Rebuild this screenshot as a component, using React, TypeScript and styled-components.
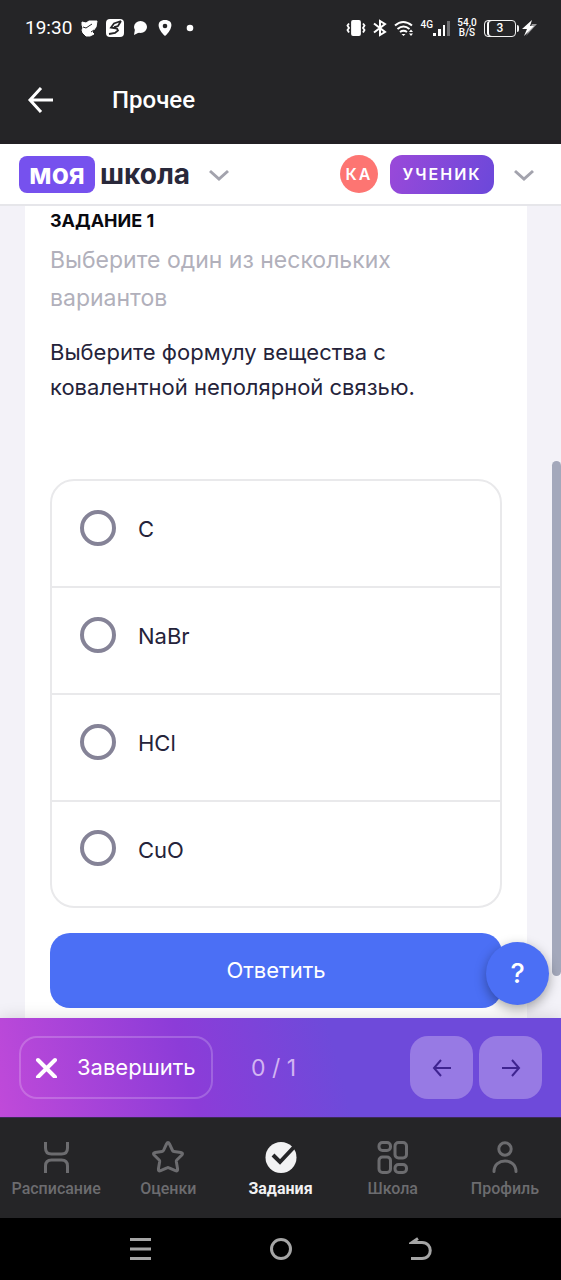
import React from "react";
import styled, { createGlobalStyle } from "styled-components";

const GlobalStyle = createGlobalStyle`
  *, *::before, *::after { box-sizing: border-box; }
  body { margin: 0; background: #000; font-family: Inter, "Liberation Sans", sans-serif; }
  button { font: inherit; border: 0; padding: 0; cursor: pointer; }
  h1, h2, p { margin: 0; }
`;

const Screen = styled.div`
  display: flex;
  flex-direction: column;
  min-height: 100vh;
`;

const TopArea = styled.div`
  background: #252527;
  color: #fff;
  border-bottom: 4px solid #221f24;
  font-family: Roboto, "Liberation Sans", sans-serif;
`;

const StatusBar = styled.div`
  display: flex;
  align-items: center;
  justify-content: space-between;
  height: 56px;
  padding: 0 23px 0 25px;
`;

const StatusGroup = styled.div<{ $gap: number }>`
  display: flex;
  align-items: center;
  gap: ${(p) => p.$gap}px;
  svg { display: block; flex: none; }
`;

const Clock = styled.span`
  font-size: 19px;
  line-height: 24px;
`;

const Speed = styled.span`
  display: flex;
  flex-direction: column;
  align-items: center;
  width: 20px;
  font-size: 10px;
  line-height: 10px;
  font-weight: 500;
`;

const Signal = styled.span`
  display: flex;
  align-items: flex-end;
`;

const Network = styled.span`
  font-size: 10px;
  line-height: 12px;
  font-weight: 500;
  align-self: flex-start;
`;

const Battery = styled.span`
  display: flex;
  align-items: center;
  gap: 1px;
`;

const BatteryBody = styled.span`
  display: flex;
  align-items: center;
  justify-content: center;
  width: 32px;
  height: 17px;
  border: 1px solid #f2f2f2;
  border-radius: 4px;
  font-size: 12px;
  font-weight: 500;
  line-height: 12px;
  box-shadow: inset 2px 0 #252527, inset 4px 0 #fff;
`;

const BatteryTip = styled.span`
  width: 2px;
  height: 7px;
  background: #f2f2f2;
  border-radius: 0 2px 2px 0;
`;

const AppBar = styled.header`
  display: flex;
  align-items: center;
  gap: 58px;
  height: 84px;
  padding: 4px 27px 0;
`;

const AppTitle = styled.h1`
  font-size: 24px;
  line-height: 28px;
  font-weight: 500;
`;

const IconButton = styled.button`
  display: flex;
  align-items: center;
  justify-content: center;
  background: none;
  color: inherit;
`;

const SiteHeader = styled.div`
  display: flex;
  align-items: center;
  justify-content: space-between;
  height: 62px;
  padding: 0 25px 0 19px;
  background: #fff;
  border-bottom: 2px solid #e6e6ea;
  color: #a3a3ad;
`;

const Cluster = styled.div<{ $gap: number }>`
  display: flex;
  align-items: center;
  gap: ${(p) => p.$gap}px;
`;

const Logo = styled.a`
  display: flex;
  align-items: center;
  gap: 5px;
  color: #29283a;
  font-size: 28px;
  line-height: 36px;
  font-weight: 700;
  text-decoration: none;
`;

const LogoBadge = styled.span`
  width: 76px;
  height: 37px;
  text-align: center;
  background: #7651ee;
  color: #fff;
  border-radius: 8px;
`;

const Avatar = styled.span`
  width: 38px;
  height: 38px;
  border-radius: 50%;
  background: #fd7572;
  color: #fff;
  font-size: 16px;
  line-height: 38px;
  font-weight: 600;
  letter-spacing: 2px;
  text-align: center;
`;

const RoleButton = styled.button`
  width: 104px;
  height: 39px;
  border-radius: 12px;
  background: linear-gradient(110deg, #9a49d9, #6b48da);
  color: #fff;
  font-size: 16px;
  font-weight: 600;
  letter-spacing: 2px;
`;

const Main = styled.main`
  position: relative;
  flex: 1;
  display: flex;
  padding: 0 34px 0 25px;
  background: #f3f2f8;
`;

const Card = styled.form`
  flex: 1;
  padding: 1px 25px 10px;
  background: #fff;
`;

const TaskNumber = styled.h2`
  color: #09090f;
  font-size: 18px;
  line-height: 28px;
  font-weight: 700;
`;

const Hint = styled.p`
  padding-top: 6px;
  color: #b1b0bb;
  font-size: 23px;
  line-height: 38px;
`;

const Question = styled.legend`
  padding: 18px 0 0;
  color: #25233a;
  font-size: 22px;
  line-height: 35px;
`;

const Fieldset = styled.fieldset`
  margin: 0;
  padding: 0;
  border: 0;
  min-width: 0;
`;

const OptionList = styled.div`
  margin-top: 74px;
  border: 2px solid #e9e9eb;
  border-radius: 24px;
`;

const Option = styled.label`
  display: flex;
  align-items: center;
  gap: 22px;
  height: 107px;
  padding: 0 28px 12px;
  color: #25233a;
  font-size: 22px;
  line-height: 30px;
  cursor: pointer;
  & + & { border-top: 2px solid #e9e9eb; }
  &:first-child { height: 105px; }
  &:last-child { height: 106px; }
`;

const Radio = styled.input`
  appearance: none;
  width: 36px;
  height: 36px;
  margin: 0;
  border: 4px solid #858397;
  border-radius: 50%;
  background: #fff;
  &:checked { border-width: 11px; border-color: #4c6ff4; }
`;

const OptionText = styled.span`
  padding-top: 3px;
`;

const SubmitButton = styled.button`
  display: block;
  width: 100%;
  height: 75px;
  margin-top: 25px;
  padding-bottom: 2px;
  border-radius: 20px;
  background: #4b6ff5;
  color: #fff;
  font-size: 22px;
`;

const ScrollThumb = styled.div`
  position: absolute;
  top: 255px;
  right: 0;
  bottom: 42px;
  width: 9px;
  border-radius: 5px;
  background: #a3a8bb;
`;

const HelpButton = styled.button`
  position: absolute;
  right: 12px;
  bottom: 13px;
  width: 63px;
  height: 63px;
  border-radius: 50%;
  background: #4b6ff5;
  color: #fff;
  font-size: 27px;
  font-weight: 500;
  box-shadow: 0 4px 12px rgba(0, 0, 0, 0.35);
`;

const ActionBar = styled.div`
  position: relative;
  display: flex;
  align-items: center;
  justify-content: space-between;
  height: 100px;
  padding: 0 19px;
  border-bottom: 1px solid #3c2a58;
  background: linear-gradient(75deg, #c04ad9 0%, #8c3cd8 34%, #6e4ada 60%, #6e4ada 100%);
  box-shadow: 0 0 16px rgba(0, 0, 0, 0.14);
`;

const FinishButton = styled.button`
  display: flex;
  align-items: center;
  gap: 20px;
  width: 194px;
  height: 63px;
  padding: 0 0 2px 14px;
  border: 2px solid rgba(255, 255, 255, 0.2);
  border-radius: 18px;
  background: none;
  color: #fff;
  font-size: 22px;
`;

const Progress = styled.span`
  color: #d2b4f2;
  font-size: 23px;
`;

const StepButton = styled(IconButton)`
  width: 63px;
  height: 63px;
  border-radius: 18px;
  background: #977ae4;
  color: #3f2490;
`;

const TabBar = styled.nav`
  position: relative;
  display: flex;
  height: 100px;
  background: #252527;
`;

const Tab = styled.a<{ $active?: boolean }>`
  flex: 1 1 0;
  min-width: 0;
  display: flex;
  flex-direction: column;
  align-items: center;
  gap: 4px;
  padding-top: 22px;
  color: ${(p) => (p.$active ? "#f2f2f3" : "#6c6c6f")};
  font-family: Roboto, "Liberation Sans", sans-serif;
  font-size: 16px;
  line-height: 22px;
  font-weight: ${(p) => (p.$active ? 700 : 500)};
  text-decoration: none;
`;

const SystemBar = styled.div`
  display: flex;
  align-items: center;
  justify-content: center;
  gap: 116px;
  height: 62px;
  background: #000;
  color: #a5a5a5;
`;

type LineIconProps = {
  w: number;
  h: number;
  stroke?: number;
  children: React.ReactNode;
};

const LineIcon = ({ w, h, stroke = 3, children }: LineIconProps) => (
  <svg width={w} height={h} viewBox={`0 0 ${w} ${h}`} fill="none" stroke="currentColor" strokeWidth={stroke} aria-hidden="true">
    {children}
  </svg>
);

const options = ["C", "NaBr", "HCl", "CuO"];

const tabs = [
  {
    label: "Расписание",
    icon: <path d="M6.500 2v6q0 6 6 6h10q6 0 6-6V2M6.500 33v-7q0-6 6-6h10q6 0 6 6v7" />,
  },
  {
    label: "Оценки",
    icon: (
      <path
        strokeLinejoin="round"
        d="M15.500 4q1.500-3 3 0l3 6.500q.4.900 1.400 1l7 1q2.600.5 1 2.500l-5.100 5q-.6.600-.5 1.500l1.300 7.500q.2 2.600-2.200 1.600L18 27.800q-1-.5-2 0l-6.400 2.800q-2.400 1-2.200-1.600L8.700 21.500q.1-.9-.5-1.500l-5.100-5q-1.600-2 1-2.500l7-1q1-.1 1.400-1z"
      />
    ),
  },
  {
    label: "Задания",
    active: true,
    icon: (
      <>
        <circle cx="17" cy="17.500" r="15.500" fill="currentColor" stroke="none" />
        <path d="M9 15l7 7L31 6" stroke="#252527" strokeWidth="4" />
      </>
    ),
  },
  {
    label: "Школа",
    icon: (
      <>
        <rect x="3" y="2.500" width="11.500" height="8" rx="3.500" />
        <rect x="19" y="2.500" width="11.500" height="15.500" rx="3.500" />
        <rect x="3" y="17" width="11.500" height="15.500" rx="3.500" />
        <rect x="19" y="24.500" width="11.500" height="8" rx="3.500" />
      </>
    ),
  },
  {
    label: "Профиль",
    icon: (
      <>
        <circle cx="17" cy="9" r="6.200" />
        <path d="M6 31.500c0-14 22-14 22 0" strokeLinecap="round" />
      </>
    ),
  },
];

export default function App() {
  return (
    <>
      <GlobalStyle />
      <Screen>
        <TopArea>
          <StatusBar>
            <StatusGroup $gap={8}>
              <Clock>19:30</Clock>
              <svg width="18" height="18" viewBox="0 0 18 18" aria-hidden="true">
                <path d="M2 3l4 1 3-2 8 0-1 6-3 4-1 1 2 2-4 2H6l-3-3-1-3 1-2-1-3z" fill="#fff" stroke="#fff" strokeLinejoin="round" />
                <path d="M3 8l3 1 6-4M11 13l3-2" stroke="#252527" fill="none" />
              </svg>
              <svg width="18" height="18" viewBox="0 0 18 18" aria-hidden="true">
                <rect width="18" height="18" rx="4" fill="#fff" />
                <path d="M15 2L8 4.500 5 8.500l6 1 1 2-3 2.500-6 1M15 2l-3 5-4 1" stroke="#252527" strokeWidth="1.800" fill="none" />
              </svg>
              <svg width="16" height="16" viewBox="0 0 16 16" fill="#fff" aria-hidden="true">
                <ellipse cx="8.500" cy="7" rx="6.500" ry="6" />
                <path d="M3 9l-1 6 6-3z" />
              </svg>
              <svg width="18" height="18" viewBox="0 0 18 18" aria-hidden="true">
                <path d="M9 1c-9 0-8 9 0 16 8-7 9-16 0-16z" fill="#fff" />
                <circle cx="9" cy="7" r="2.300" fill="#252527" />
              </svg>
              <svg width="16" height="8" viewBox="0 0 16 8" fill="#fff" aria-hidden="true">
                <circle cx="8" cy="4" r="3.300" />
              </svg>
            </StatusGroup>
            <StatusGroup $gap={7}>
              <svg width="20" height="16" viewBox="0 0 20 16" fill="none" stroke="#fff" strokeWidth="1.800" aria-hidden="true">
                <rect x="6" y="1" width="8" height="14" rx="1" fill="#fff" />
                <path d="M3 3.500L1.500 5.500 3 8l-1.500 2L3 12.500M17 3.500l1.500 2L17 8l1.500 2-1.500 2.500" />
              </svg>
              <svg width="14" height="18" viewBox="0 0 14 18" fill="none" stroke="#fff" strokeWidth="2" aria-hidden="true">
                <path d="M1 4.500l11 8.500-5 3V2l5 3L1 13.500" />
              </svg>
              <svg width="20" height="17" viewBox="0 0 20 17" fill="none" stroke="#fff" strokeWidth="2" aria-hidden="true">
                <path d="M1 5.500q8-7 17 0M3.500 9q6-5 12 0M6 12q3.500-2.500 7 0" />
                <path d="M7.500 14h4l-2 2z" fill="#fff" stroke="none" />
                <path d="M15 12l2-2.500 2 2.500zM15 13.500h4L17 16z" fill="#fff" stroke="none" />
              </svg>
              <Signal>
                <Network>4G</Network>
                <svg width="17" height="18" viewBox="0 0 17 18" fill="#fff" aria-hidden="true">
                  <path d="M0 14h3v3H0zM5 10h3v7H5zM10 6h2v11h-2z" />
                  <path d="M14 2h3v15h-3z" fill="#6d6d70" />
                </svg>
              </Signal>
              <Speed>
                <span>54,0</span>
                <span>B/S</span>
              </Speed>
              <Battery>
                <BatteryBody>3</BatteryBody>
                <BatteryTip />
                <svg width="18" height="16" viewBox="0 0 18 16" fill="#fff" aria-hidden="true">
                  <path d="M12 4h5L6 16l3-6z" fill="#99999b" />
                  <path d="M12 0L2 9h5l-3 7 10-10h-4z" />
                </svg>
              </Battery>
            </StatusGroup>
          </StatusBar>
          <AppBar>
            <IconButton type="button" aria-label="Назад">
              <LineIcon w={27} h={26}>
                <path d="M26 13H3M14 1L3 13l11 12" />
              </LineIcon>
            </IconButton>
            <AppTitle>Прочее</AppTitle>
          </AppBar>
        </TopArea>

        <SiteHeader>
          <Cluster $gap={18}>
            <Logo href="#">
              <LogoBadge>моя</LogoBadge>
              <span>школа</span>
            </Logo>
            <IconButton type="button" aria-label="Разделы">
              <LineIcon w={22} h={14}>
                <path d="M2 4l9 8 9-8" />
              </LineIcon>
            </IconButton>
          </Cluster>
          <Cluster $gap={12}>
            <Avatar>КА</Avatar>
            <RoleButton type="button">УЧЕНИК</RoleButton>
            <IconButton type="button" aria-label="Меню профиля">
              <LineIcon w={30} h={14}>
                <path d="M9 4l9 8 9-8" />
              </LineIcon>
            </IconButton>
          </Cluster>
        </SiteHeader>

        <Main>
          <Card>
            <TaskNumber>ЗАДАНИЕ 1</TaskNumber>
            <Hint>Выберите один из нескольких вариантов</Hint>
            <Fieldset>
              <Question>Выберите формулу вещества с ковалентной неполярной связью.</Question>
              <OptionList>
                {options.map((option) => (
                  <Option key={option}>
                    <Radio type="radio" name="answer" value={option} />
                    <OptionText>{option}</OptionText>
                  </Option>
                ))}
              </OptionList>
            </Fieldset>
            <SubmitButton type="button">Ответить</SubmitButton>
          </Card>
          <ScrollThumb />
          <HelpButton type="button">?</HelpButton>
        </Main>

        <ActionBar>
          <Cluster $gap={38}>
            <FinishButton type="button">
              <LineIcon w={22} h={22} stroke={4}>
                <path d="M3 4l17 17M20 4L3 21" strokeLinecap="round" />
              </LineIcon>
              Завершить
            </FinishButton>
            <Progress>0 / 1</Progress>
          </Cluster>
          <Cluster $gap={6}>
            <StepButton type="button" aria-label="Предыдущее задание">
              <LineIcon w={20} h={18} stroke={2}>
                <path d="M19 9H2M9 1L2 9l7 8" />
              </LineIcon>
            </StepButton>
            <StepButton type="button" aria-label="Следующее задание">
              <LineIcon w={20} h={18} stroke={2}>
                <path d="M1 9h17M11 1l7 8-7 8" />
              </LineIcon>
            </StepButton>
          </Cluster>
        </ActionBar>

        <TabBar>
          {tabs.map((tab) => (
            <Tab key={tab.label} href="#" $active={tab.active}>
              <LineIcon w={34} h={34}>
                {tab.icon}
              </LineIcon>
              {tab.label}
            </Tab>
          ))}
        </TabBar>

        <SystemBar>
          <IconButton type="button" aria-label="Недавние приложения">
            <LineIcon w={24} h={24}>
              <path d="M1 2.500h21M1 12h21M1 21.500h21" />
            </LineIcon>
          </IconButton>
          <IconButton type="button" aria-label="Домой">
            <LineIcon w={24} h={24}>
              <circle cx="12" cy="12" r="9.500" />
            </LineIcon>
          </IconButton>
          <IconButton type="button" aria-label="Вернуться">
            <LineIcon w={24} h={24}>
              <path d="M2 21.500h11c11 0 11-16 0-16H3L9 1.500" />
            </LineIcon>
          </IconButton>
        </SystemBar>
      </Screen>
    </>
  );
}
